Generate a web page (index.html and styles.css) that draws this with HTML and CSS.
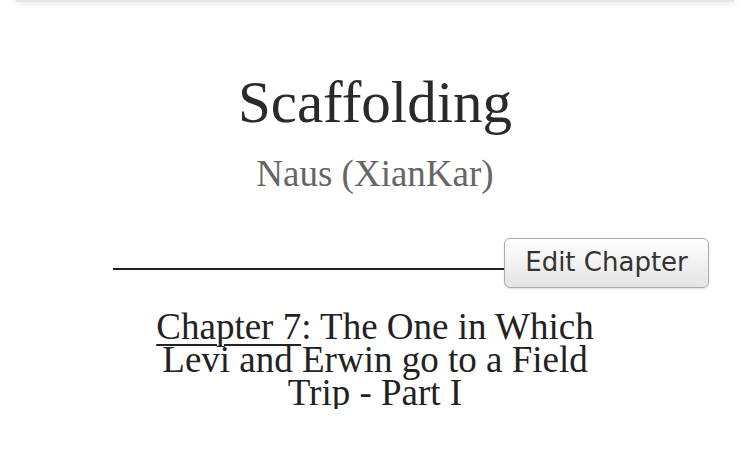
FILE: index.html
```html
<!DOCTYPE html>
<html lang="en">
<head>
<meta charset="utf-8">
<title>Scaffolding</title>
<link rel="stylesheet" href="styles.css">
</head>
<body>
  <div class="topbar"></div>
  <main class="story">
    <h1 class="story-title">Scaffolding</h1>
    <p class="story-author">Naus (XianKar)</p>
    <div class="toolbar">
      <div class="rule"></div>
      <button class="btn" type="button">Edit Chapter</button>
    </div>
    <h2 class="chapter-title"><a class="chapter-link" href="#">Chapter 7</a>: The One in Which Levi and Erwin go to a Field Trip - Part I</h2>
  </main>
</body>
</html>
```

FILE: styles.css
```css
html, body {
  margin: 0;
  padding: 0;
  background: #ffffff;
}

body {
  font-family: "Liberation Serif", "Times New Roman", serif;
  color: #222;
  overflow: hidden;
}

.topbar {
  height: 2px;
  margin: 0 16px;
  background: #e6e6e6;
  box-shadow: 0 1px 7px rgba(0, 0, 0, 0.22);
}

.story {
  display: flex;
  flex-direction: column;
  align-items: center;
}

.story-title {
  margin: 71px 0 0;
  font-size: 59px;
  line-height: 59px;
  font-weight: normal;
  color: #2a2a2a;
}

.story-author {
  margin: 23px 0 0;
  font-size: 37px;
  line-height: 37px;
  color: #666;
}

.toolbar {
  display: flex;
  align-items: flex-start;
  align-self: flex-start;
  width: 596px;
  margin: 46px 0 0 113px;
}

.rule {
  flex: 1;
  height: 30px;
  border-bottom: 2px solid #222;
}

.btn {
  box-sizing: border-box;
  width: 205px;
  height: 50px;
  padding: 0 0 2px;
  border: 1.5px solid #ababab;
  border-radius: 6px;
  background: linear-gradient(#ffffff, #f3f3f3 45%, #e4e4e4);
  box-shadow: 0 1px 2px rgba(0, 0, 0, 0.12);
  font-family: "DejaVu Sans", Verdana, sans-serif;
  font-size: 26px;
  color: #333;
  text-align: center;
}

.chapter-title {
  width: 468px;
  margin: 22px 0 0;
  font-size: 37px;
  line-height: 33px;
  font-weight: normal;
  color: #222;
  text-align: center;
}

.chapter-link {
  color: #222;
  text-decoration: underline;
  text-decoration-thickness: 2px;
  text-underline-offset: 5px;
}
```
